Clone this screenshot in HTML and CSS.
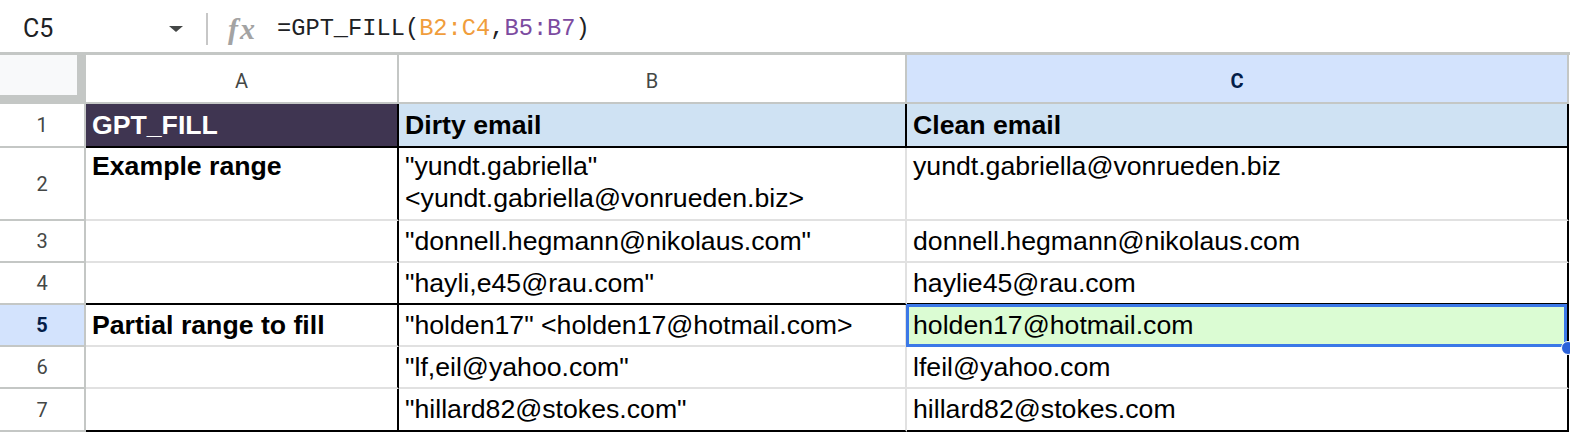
FILE: index.html
```html
<!DOCTYPE html>
<html lang="en">
<head>
  <meta charset="UTF-8">
  <meta name="viewport" content="width=device-width, initial-scale=1">
  <title>GPT_FILL - Sheet</title>
  <link rel="stylesheet" href="styles.css">
</head>
<body>
  <div class="formula-bar">
    <div class="name-box">
      <span class="cell-ref">C5</span>
      <span class="caret"></span>
    </div>
    <div class="divider"></div>
    <span class="fx">fx</span>
    <div class="formula">=GPT_FILL(<span class="ref-a">B2:C4</span>,<span class="ref-b">B5:B7</span>)</div>
  </div>

  <div class="sheet">
    <div class="row">
      <div class="corner"></div>
      <div class="col-head">A</div>
      <div class="col-head">B</div>
      <div class="col-head active">C</div>
    </div>
    <div class="row heading">
      <div class="row-head">1</div>
      <div class="cell a">GPT_FILL</div>
      <div class="cell b">Dirty email</div>
      <div class="cell c">Clean email</div>
    </div>
    <div class="row tall">
      <div class="row-head">2</div>
      <div class="cell a strong">Example range</div>
      <div class="cell b">"yundt.gabriella" &lt;yundt.gabriella@vonrueden.biz&gt;</div>
      <div class="cell c">yundt.gabriella@vonrueden.biz</div>
    </div>
    <div class="row">
      <div class="row-head">3</div>
      <div class="cell a"></div>
      <div class="cell b">"donnell.hegmann@nikolaus.com"</div>
      <div class="cell c">donnell.hegmann@nikolaus.com</div>
    </div>
    <div class="row group-end">
      <div class="row-head">4</div>
      <div class="cell a"></div>
      <div class="cell b">"hayli,e45@rau.com"</div>
      <div class="cell c">haylie45@rau.com</div>
    </div>
    <div class="row current">
      <div class="row-head">5</div>
      <div class="cell a strong">Partial range to fill</div>
      <div class="cell b">"holden17" &lt;holden17@hotmail.com&gt;</div>
      <div class="cell c filled">
        holden17@hotmail.com
        <div class="selection"><span class="handle"></span></div>
      </div>
    </div>
    <div class="row">
      <div class="row-head">6</div>
      <div class="cell a"></div>
      <div class="cell b">"lf,eil@yahoo.com"</div>
      <div class="cell c">lfeil@yahoo.com</div>
    </div>
    <div class="row group-end">
      <div class="row-head">7</div>
      <div class="cell a"></div>
      <div class="cell b">"hillard82@stokes.com"</div>
      <div class="cell c">hillard82@stokes.com</div>
    </div>
  </div>
</body>
</html>
```

FILE: styles.css
```css
body {
  margin: 0;
  width: 1570px;
  height: 432px;
  overflow: hidden;
  background: #fff;
  font-family: "Liberation Sans", Arial, sans-serif;
  color: #000;
}

/* formula bar */
.formula-bar {
  display: flex;
  align-items: center;
  height: 47px;
  padding-top: 5px;
  border-bottom: 3px solid #c4c7c5;
}
.name-box {
  display: flex;
  align-items: center;
  justify-content: space-between;
  width: 183px;
  padding-left: 23px;
  box-sizing: border-box;
}
.cell-ref {
  font-family: Roboto, "Liberation Sans", sans-serif;
  font-size: 25px;
  color: #202124;
}
.caret {
  width: 0;
  height: 0;
  border-left: 7.5px solid transparent;
  border-right: 7.5px solid transparent;
  border-top: 6px solid #444746;
}
.divider {
  width: 2px;
  height: 32px;
  margin-left: 23px;
  background: #c7c7c7;
}
.fx {
  margin-left: 20px;
  font-family: "Liberation Serif", serif;
  font-style: italic;
  font-weight: bold;
  font-size: 30px;
  letter-spacing: 2px;
  line-height: 1;
  color: #a3a3a3;
}
.formula {
  margin-left: 20px;
  font-family: "Liberation Mono", monospace;
  font-size: 23.7px;
  color: #202124;
}
.ref-a {
  color: #f09d3c;
}
.ref-b {
  color: #7c4ba0;
}

/* grid */
.sheet {
  display: grid;
  grid-template-columns: 86px 313px 508px 662px;
  grid-template-rows: 49px 44px 73px repeat(4, 42px) 43px;
}
.row {
  display: contents;
}
.corner {
  background: #f8f9fa;
  border-right: 9px solid #c4c7c5;
  border-bottom: 9px solid #c4c7c5;
}
.col-head,
.row-head {
  display: flex;
  align-items: center;
  justify-content: center;
  font-family: Roboto, "Liberation Sans", sans-serif;
  font-size: 20px;
  color: #444746;
  border-right: 2px solid #c4c7c5;
  border-bottom: 2px solid #c4c7c5;
}
.col-head {
  padding-top: 4px;
}
.col-head.active,
.current .row-head {
  background: #d3e3fd;
  color: #041e49;
  font-weight: bold;
}
.cell {
  display: flex;
  align-items: center;
  padding: 0 6px;
  font-size: 26.67px;
  white-space: nowrap;
  border-right: 2px solid #e1e1e1;
  border-bottom: 2px solid #e1e1e1;
}
.cell.a,
.cell.c {
  border-right-color: #000;
}
.heading .cell,
.group-end .cell {
  border-bottom-color: #000;
}
.heading .cell {
  font-weight: bold;
  background: #cfe2f3;
}
.heading .cell.b {
  border-right-color: #000;
}
.heading .cell.a {
  background: #3f3551;
  color: #fff;
}
.tall .cell {
  align-items: flex-start;
  padding-top: 2px;
  line-height: 32px;
  white-space: normal;
}
.strong {
  font-weight: bold;
}

/* active cell */
.filled {
  position: relative;
  background: #dbfcd3;
}
.selection {
  position: absolute;
  top: -1px;
  left: -1px;
  right: 0;
  bottom: -2px;
  border: 3px solid #3b78e7;
}
.handle {
  position: absolute;
  right: -11px;
  bottom: -11px;
  width: 14px;
  height: 14px;
  box-sizing: border-box;
  border-radius: 50%;
  border: 1px solid #fff;
  background: #2b62d9;
}
```
